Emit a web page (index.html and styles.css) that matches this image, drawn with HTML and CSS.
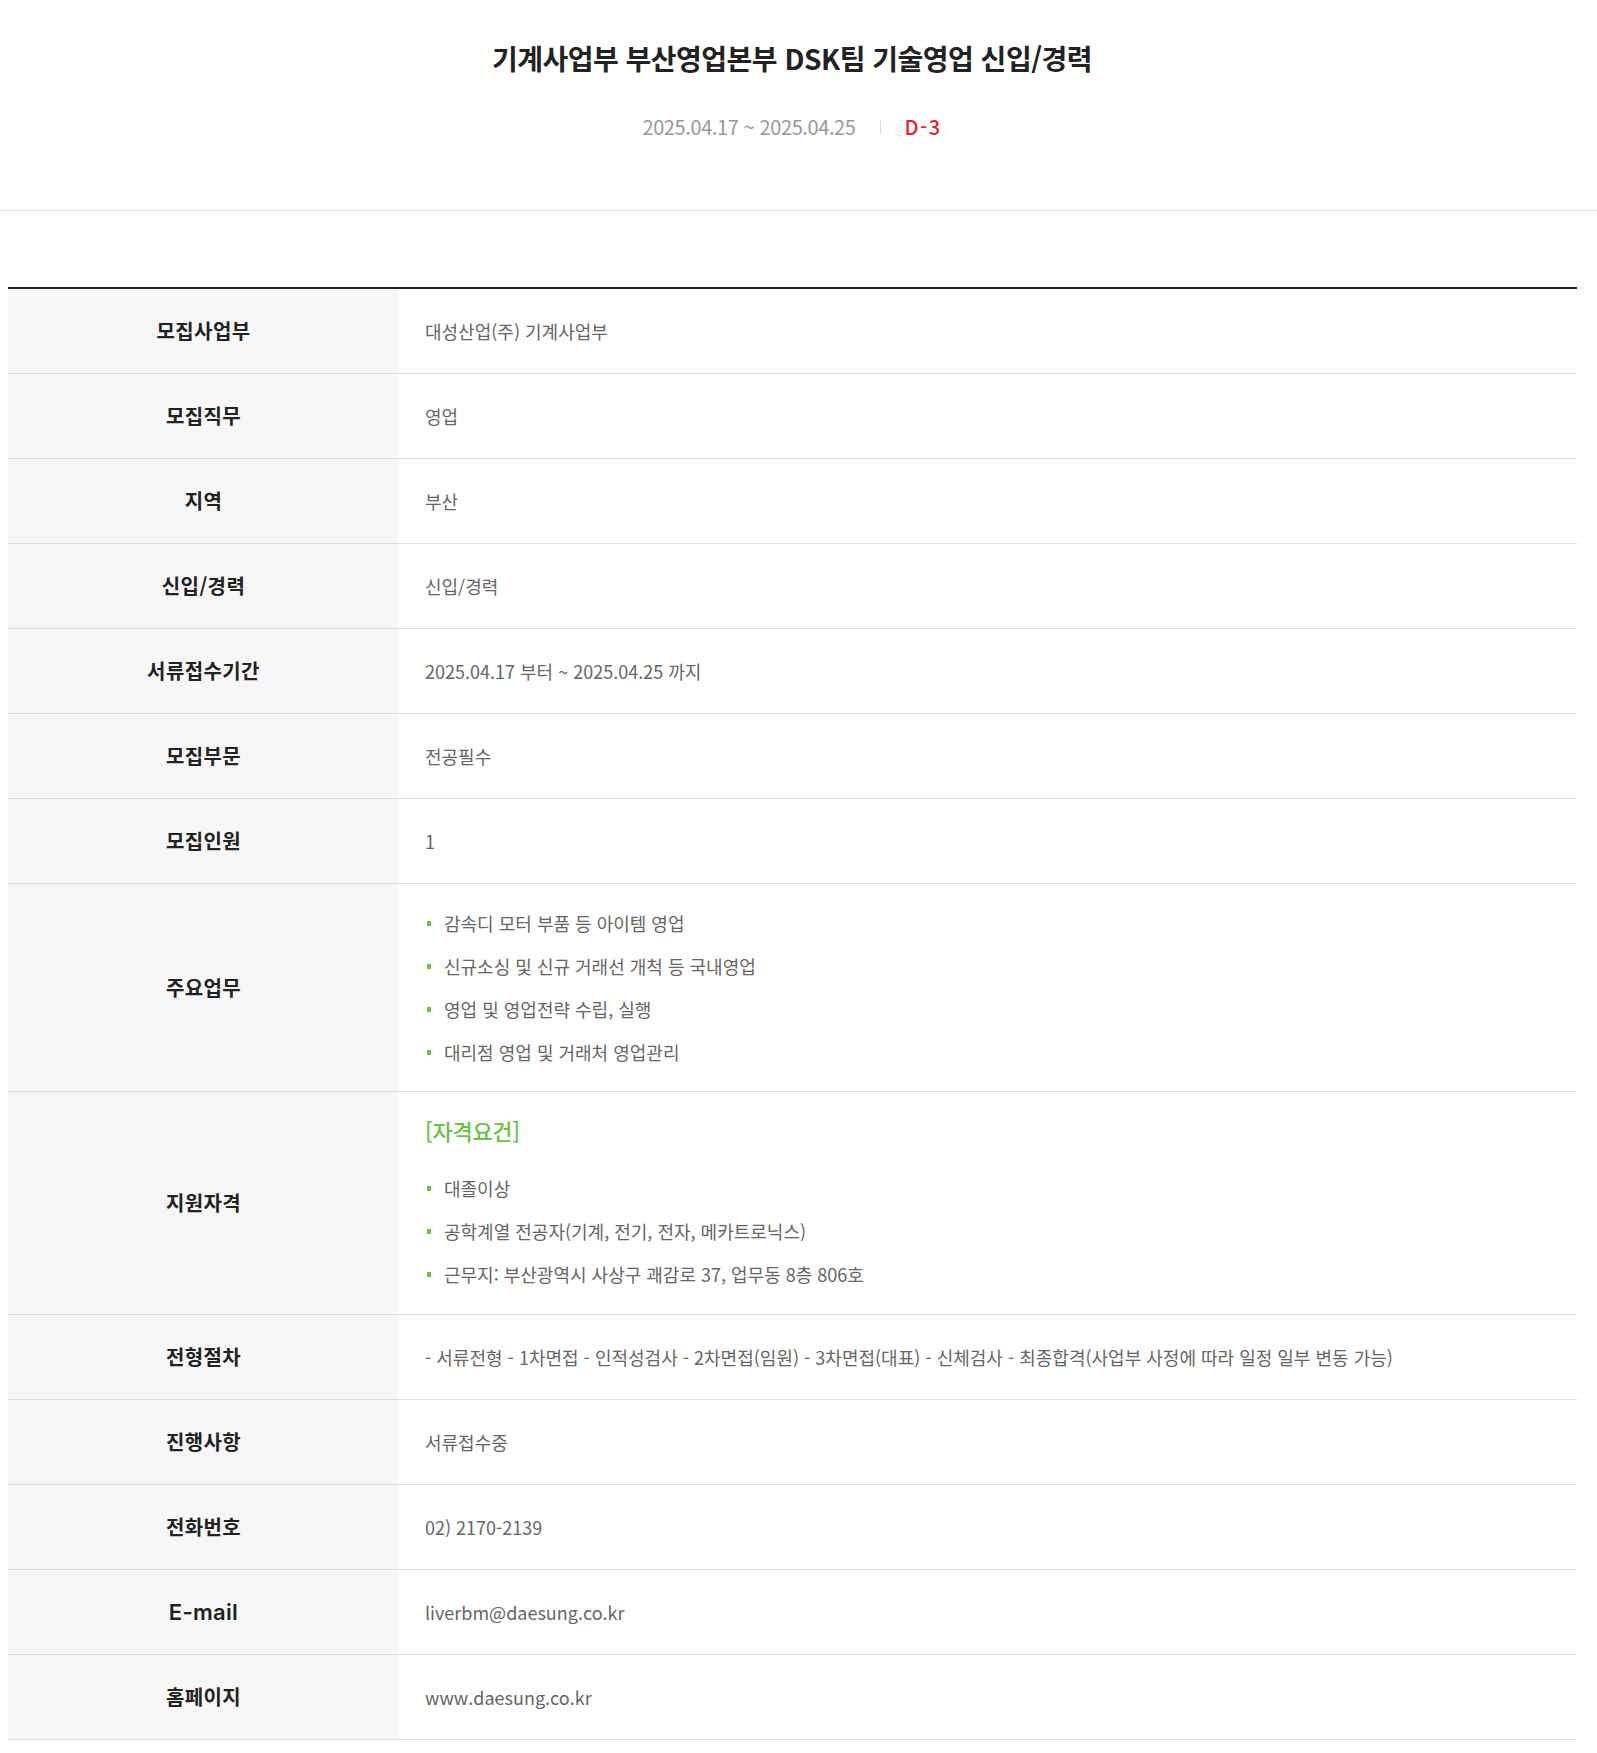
FILE: index.html
```html
<!DOCTYPE html>
<html lang="ko">
<head>
<meta charset="utf-8">
<title>채용공고</title>
<link rel="stylesheet" href="styles.css">
</head>
<body>
<header class="head">
  <h1 class="title">기계사업부 부산영업본부 DSK팀 기술영업 신입/경력</h1>
  <div class="period">
    <span class="dates">2025.04.17 ~ 2025.04.25</span>
    <span class="sep"></span>
    <span class="dday">D-3</span>
  </div>
</header>
<main class="wrap">
  <table class="info">
    <tbody>
      <tr><th>모집사업부</th><td>대성산업(주) 기계사업부</td></tr>
      <tr><th>모집직무</th><td>영업</td></tr>
      <tr><th>지역</th><td>부산</td></tr>
      <tr><th>신입/경력</th><td>신입/경력</td></tr>
      <tr><th>서류접수기간</th><td>2025.04.17 부터 ~ 2025.04.25 까지</td></tr>
      <tr><th>모집부문</th><td>전공필수</td></tr>
      <tr><th>모집인원</th><td>1</td></tr>
      <tr class="tall"><th>주요업무</th><td>
        <ul class="dots">
          <li>감속디 모터 부품 등 아이템 영업</li>
          <li>신규소싱 및 신규 거래선 개척 등 국내영업</li>
          <li>영업 및 영업전략 수립, 실행</li>
          <li>대리점 영업 및 거래처 영업관리</li>
        </ul>
      </td></tr>
      <tr class="tall qual"><th>지원자격</th><td>
        <p class="subtit">[자격요건]</p>
        <ul class="dots">
          <li>대졸이상</li>
          <li>공학계열 전공자(기계, 전기, 전자, 메카트로닉스)</li>
          <li>근무지: 부산광역시 사상구 괘감로 37, 업무동 8층 806호</li>
        </ul>
      </td></tr>
      <tr><th>전형절차</th><td>- 서류전형 - 1차면접 - 인적성검사 - 2차면접(임원) - 3차면접(대표) - 신체검사 - 최종합격(사업부 사정에 따라 일정 일부 변동 가능)</td></tr>
      <tr><th>진행사항</th><td>서류접수중</td></tr>
      <tr><th>전화번호</th><td>02) 2170-2139</td></tr>
      <tr><th class="latin">E-mail</th><td>liverbm@daesung.co.kr</td></tr>
      <tr><th>홈페이지</th><td>www.daesung.co.kr</td></tr>
    </tbody>
  </table>
</main>
</body>
</html>
```
FILE: styles.css
```css
* { box-sizing: border-box; }
html, body { margin: 0; padding: 0; background: #fff; }
body {
  font-family: "Noto Sans CJK KR", "Noto Sans", sans-serif;
  color: #222;
}
.head {
  border-bottom: 1px solid #e2e2e2;
  text-align: center;
  padding: 37px 13px 0 0;
  height: 211px;
}
.title {
  margin: 0;
  font-size: 28px;
  font-weight: 700;
  letter-spacing: -0.5px;
  line-height: 42px;
  color: #222;
}
.period {
  margin-top: 34px;
  display: flex;
  justify-content: center;
  align-items: center;
  font-size: 20px;
  line-height: 28px;
  letter-spacing: -0.4px;
}
.dates { color: #999; }
.sep {
  display: inline-block;
  width: 1px;
  height: 14px;
  background: #ddd;
  margin: 0 24px;
}
.dday { color: #e6212e; font-weight: 500; letter-spacing: 1.5px; }
.wrap {
  padding: 76px 20px 0 8px;
}
.info {
  width: 100%;
  border-collapse: collapse;
  border-top: 2px solid #222;
}
.info th, .info td {
  border-bottom: 1px solid #ddd;
  height: 85px;
  vertical-align: middle;
}
.info th {
  width: 391px;
  background: #f7f7f7;
  font-size: 20px;
  font-weight: 700;
  color: #222;
  letter-spacing: 0.4px;
  text-align: center;
  padding: 0;
}
.info th.latin {
  font-family: "Inter", "Noto Sans", sans-serif;
  font-size: 22px;
  font-weight: 600;
  letter-spacing: 0.3px;
}
.info td {
  padding: 0 26px;
  font-size: 18px;
  color: #666;
  letter-spacing: 0;
  text-align: left;
}
.info tr.tall td { padding-top: 25px; padding-bottom: 25px; }
.info tr.qual td { padding-top: 18px; padding-bottom: 26px; }
.dots {
  list-style: none;
  margin: 0;
  padding: 0;
}
.dots li {
  position: relative;
  padding-left: 19px;
  line-height: 28px;
  margin-top: 15px;
}
.dots li:first-child { margin-top: 0; }
.dots li::before {
  content: "";
  position: absolute;
  left: 2px;
  top: 12px;
  width: 4px;
  height: 5px;
  background: #6cc04a;
}
.subtit {
  margin: 0 0 24px;
  font-size: 22px;
  line-height: 40px;
  color: #6cc04a;
  font-weight: 500;
  letter-spacing: -0.3px;
}
```
